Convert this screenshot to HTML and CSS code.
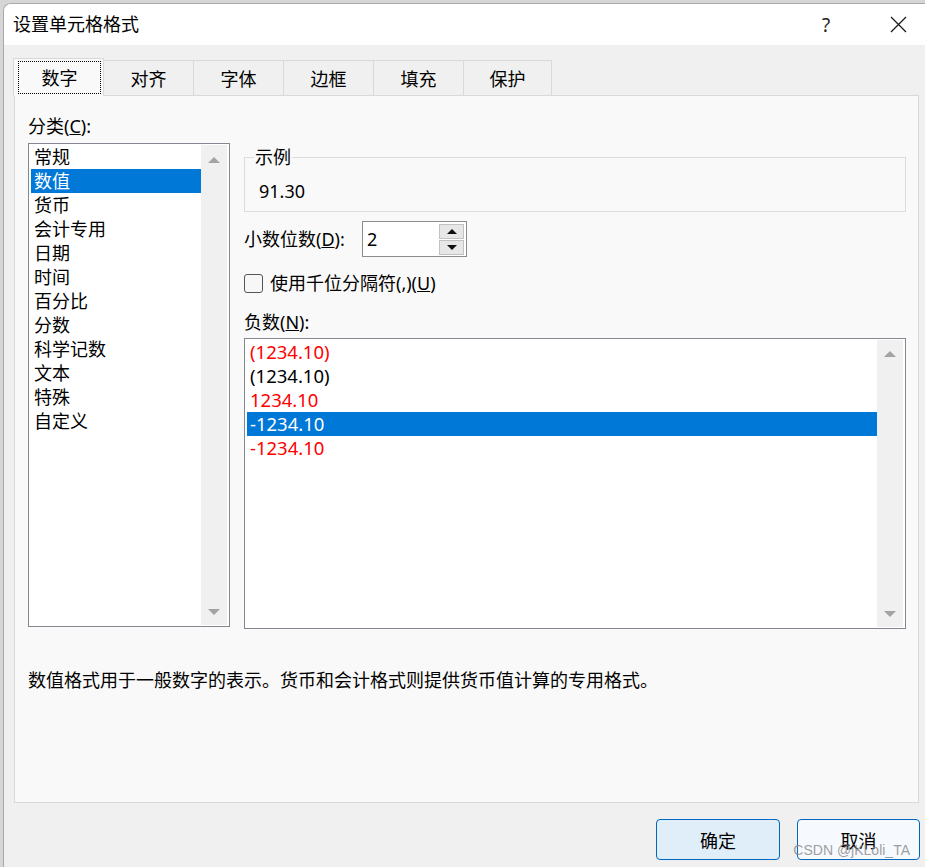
FILE: index.html
```html
<!DOCTYPE html>
<html lang="zh-CN">
<head>
<meta charset="utf-8">
<title>设置单元格格式</title>
<link rel="stylesheet" href="styles.css">
</head>
<body>
<div class="window">
  <header class="titlebar">
    <span class="title">设置单元格格式</span>
    <div class="title-actions">
      <span class="help">?</span>
      <span class="close">
        <svg width="17" height="17" viewBox="0 0 17 17"><path d="M1 1 L16 16 M16 1 L1 16" stroke="#1a1a1a" stroke-width="1.3" fill="none"/></svg>
      </span>
    </div>
  </header>
  <div class="body">
    <div class="tabs">
      <div class="tab active"><span class="focus">数字</span></div>
      <div class="tab">对齐</div>
      <div class="tab">字体</div>
      <div class="tab">边框</div>
      <div class="tab">填充</div>
      <div class="tab">保护</div>
    </div>
    <div class="panel">
      <div class="columns">
        <div class="left">
          <div class="label">分类(<u>C</u>):</div>
          <div class="listbox cat">
            <ul class="items">
              <li>常规</li>
              <li class="sel">数值</li>
              <li>货币</li>
              <li>会计专用</li>
              <li>日期</li>
              <li>时间</li>
              <li>百分比</li>
              <li>分数</li>
              <li>科学记数</li>
              <li>文本</li>
              <li>特殊</li>
              <li>自定义</li>
            </ul>
            <div class="scrollbar"><span class="arrow up"></span><span class="arrow down"></span></div>
          </div>
        </div>
        <div class="right">
          <fieldset class="sample">
            <legend>示例</legend>
            <div class="sample-value">91.30</div>
          </fieldset>
          <div class="decimal-row">
            <span class="decimal-label">小数位数(<u>D</u>):</span>
            <div class="spin-input">
              <span class="spin-value">2</span>
              <div class="spin">
                <span class="spin-btn"><span class="tri tri-up"></span></span>
                <span class="spin-btn"><span class="tri tri-down"></span></span>
              </div>
            </div>
          </div>
          <div class="check-row">
            <span class="checkbox"></span>
            <span>使用千位分隔符(,)(<u>U</u>)</span>
          </div>
          <div class="label neg-label">负数(<u>N</u>):</div>
          <div class="listbox neg">
            <ul class="items">
              <li class="red">(1234.10)</li>
              <li>(1234.10)</li>
              <li class="red">1234.10</li>
              <li class="sel">-1234.10</li>
              <li class="red">-1234.10</li>
            </ul>
            <div class="scrollbar"><span class="arrow up"></span><span class="arrow down"></span></div>
          </div>
        </div>
      </div>
      <p class="desc">数值格式用于一般数字的表示。货币和会计格式则提供货币值计算的专用格式。</p>
    </div>
    <div class="buttons">
      <button class="btn primary">确定</button>
      <button class="btn">取消</button>
    </div>
  </div>
  <div class="watermark">CSDN @jKLoli_TA</div>
</div>
</body>
</html>
```

FILE: styles.css
```css
* { box-sizing: border-box; }

html, body {
  margin: 0;
  padding: 0;
  width: 925px;
  height: 867px;
  overflow: hidden;
  background: #d6d6d6;
}

body {
  font-family: "Noto Sans", "Noto Sans CJK SC", sans-serif;
  font-size: 18px;
  line-height: 24px;
  color: #000;
}

.window {
  position: relative;
  margin: 3px 0 0 3px;
  width: 922px;
  height: 864px;
  background: #f0f0f0;
  border-left: 1px solid #a9a9a9;
  border-top: 1px solid #a9a9a9;
  border-top-left-radius: 8px;
  overflow: hidden;
}

.titlebar {
  height: 41px;
  background: #ffffff;
  display: flex;
  align-items: center;
  justify-content: space-between;
  padding-left: 9px;
}

.title {
  font-size: 18px;
  position: relative;
  top: -1px;
}

.title-actions {
  display: flex;
  align-items: center;
  height: 100%;
}

.help {
  width: 24px;
  text-align: center;
  font-size: 19px;
  color: #222;
  margin-right: 51px;
}

.close {
  display: flex;
  align-items: center;
  justify-content: center;
  width: 18px;
  margin-right: 18px;
}

.close svg { display: block; }

.tabs {
  height: 50px;
  display: flex;
  align-items: flex-end;
  padding-left: 9px;
}

.tab {
  width: 91px;
  height: 35px;
  margin-left: -1px;
  border: 1px solid #d9d9d9;
  border-bottom: none;
  background: #f0f0f0;
  display: flex;
  align-items: center;
  justify-content: center;
  padding-top: 1px;
}

.tab.active {
  width: 91px;
  margin-left: 0;
  height: 38px;
  margin-bottom: -1px;
  background: #f9f9f9;
  position: relative;
  z-index: 1;
  align-items: stretch;
  justify-content: stretch;
  padding: 2px 2px 2px 4px;
}

.tab:last-child { width: 89px; }

.focus {
  flex: 1;
  border: 1px dotted #000;
  display: flex;
  align-items: center;
  justify-content: center;
  padding-top: 1px;
}

.panel {
  margin-left: 10px;
  width: 905px;
  height: 708px;
  background: #f9f9f9;
  border: 1px solid #d9d9d9;
  padding: 18px 0 0 13px;
}

.columns {
  display: flex;
  gap: 14px;
  align-items: flex-start;
}

.left {
  width: 202px;
  display: flex;
  flex-direction: column;
  gap: 5px;
}

.label { height: 24px; }

.listbox {
  display: flex;
  background: #fff;
  border: 1px solid #828790;
  padding: 1px;
}

.listbox.cat { height: 484px; }

.listbox.neg {
  height: 291px;
  margin-top: 4px;
}

.items {
  list-style: none;
  margin: 0;
  padding: 0 0 0 1px;
  flex: 1;
}

.items li {
  height: 24px;
  line-height: 24px;
  padding-left: 3px;
  white-space: nowrap;
}

.listbox.neg .items li {
  font-size: 18.5px;
}

.items li.sel {
  background: #0078d7;
  color: #fff;
}

.items li.red { color: #ff0000; }

.scrollbar {
  width: 26px;
  margin-right: 1px;
  background: #f0f0f0;
  display: flex;
  flex-direction: column;
  justify-content: space-between;
  align-items: center;
  padding: 12px 0 10px;
}

.listbox.neg .scrollbar { padding: 11px 0 10px; }

.arrow {
  width: 0;
  height: 0;
  border-left: 6px solid transparent;
  border-right: 6px solid transparent;
}

.arrow.up { border-bottom: 6px solid #a3a3a3; }
.arrow.down { border-top: 6px solid #a3a3a3; }

.right {
  width: 662px;
  margin-top: 31px;
  display: flex;
  flex-direction: column;
}

.sample {
  margin: 0;
  border: 1px solid #dcdcdc;
  padding: 0 8px 8px 9px;
  min-width: 0;
}

.sample legend {
  padding: 0 1px;
  line-height: 24px;
}

.sample-value {
  padding: 10px 0 0 5px;
  line-height: 24px;
}

.decimal-row {
  display: flex;
  align-items: center;
  margin-top: 9px;
  height: 36px;
}

.decimal-label { width: 118px; }

.spin-input {
  width: 105px;
  height: 36px;
  border: 1px solid #8c8c8c;
  background: #fff;
  display: flex;
  align-items: flex-start;
  padding: 2px 2px 0 4px;
}

.spin-value {
  flex: 1;
  line-height: 30px;
}

.spin {
  display: flex;
  flex-direction: column;
  gap: 1px;
}

.spin-btn {
  width: 25px;
  height: 15px;
  background: #e7e7e7;
  border: 1px solid #c2c2c2;
  display: flex;
  align-items: center;
  justify-content: center;
}

.tri {
  width: 0;
  height: 0;
  border-left: 5px solid transparent;
  border-right: 5px solid transparent;
}

.tri-up { border-bottom: 5px solid #111; }
.tri-down { border-top: 5px solid #111; }

.check-row {
  display: flex;
  align-items: center;
  gap: 7px;
  margin-top: 14px;
  height: 24px;
}

.checkbox {
  width: 19px;
  height: 19px;
  border: 1px solid #555;
  border-radius: 3px;
  background: #f7f7f7;
}

.neg-label { margin-top: 15px; }

.desc {
  margin: 39px 0 0;
  line-height: 24px;
}

.buttons {
  display: flex;
  justify-content: flex-end;
  gap: 17px;
  padding: 16px 5px 0 0;
}

.btn {
  font-family: "Noto Sans", "Noto Sans CJK SC", sans-serif;
  font-size: 18px;
  width: 123px;
  height: 41px;
  border: 1px solid #0067c0;
  border-radius: 4px;
  background: #f6f9fd;
  color: #000;
  padding: 0;
}

.btn.primary {
  width: 124px;
  background: #e0eef9;
}

.watermark {
  position: absolute;
  right: 15px;
  bottom: 9px;
  font-family: "Liberation Sans", Arial, sans-serif;
  font-size: 14px;
  line-height: 16px;
  color: rgba(140, 140, 140, 0.85);
}
```
